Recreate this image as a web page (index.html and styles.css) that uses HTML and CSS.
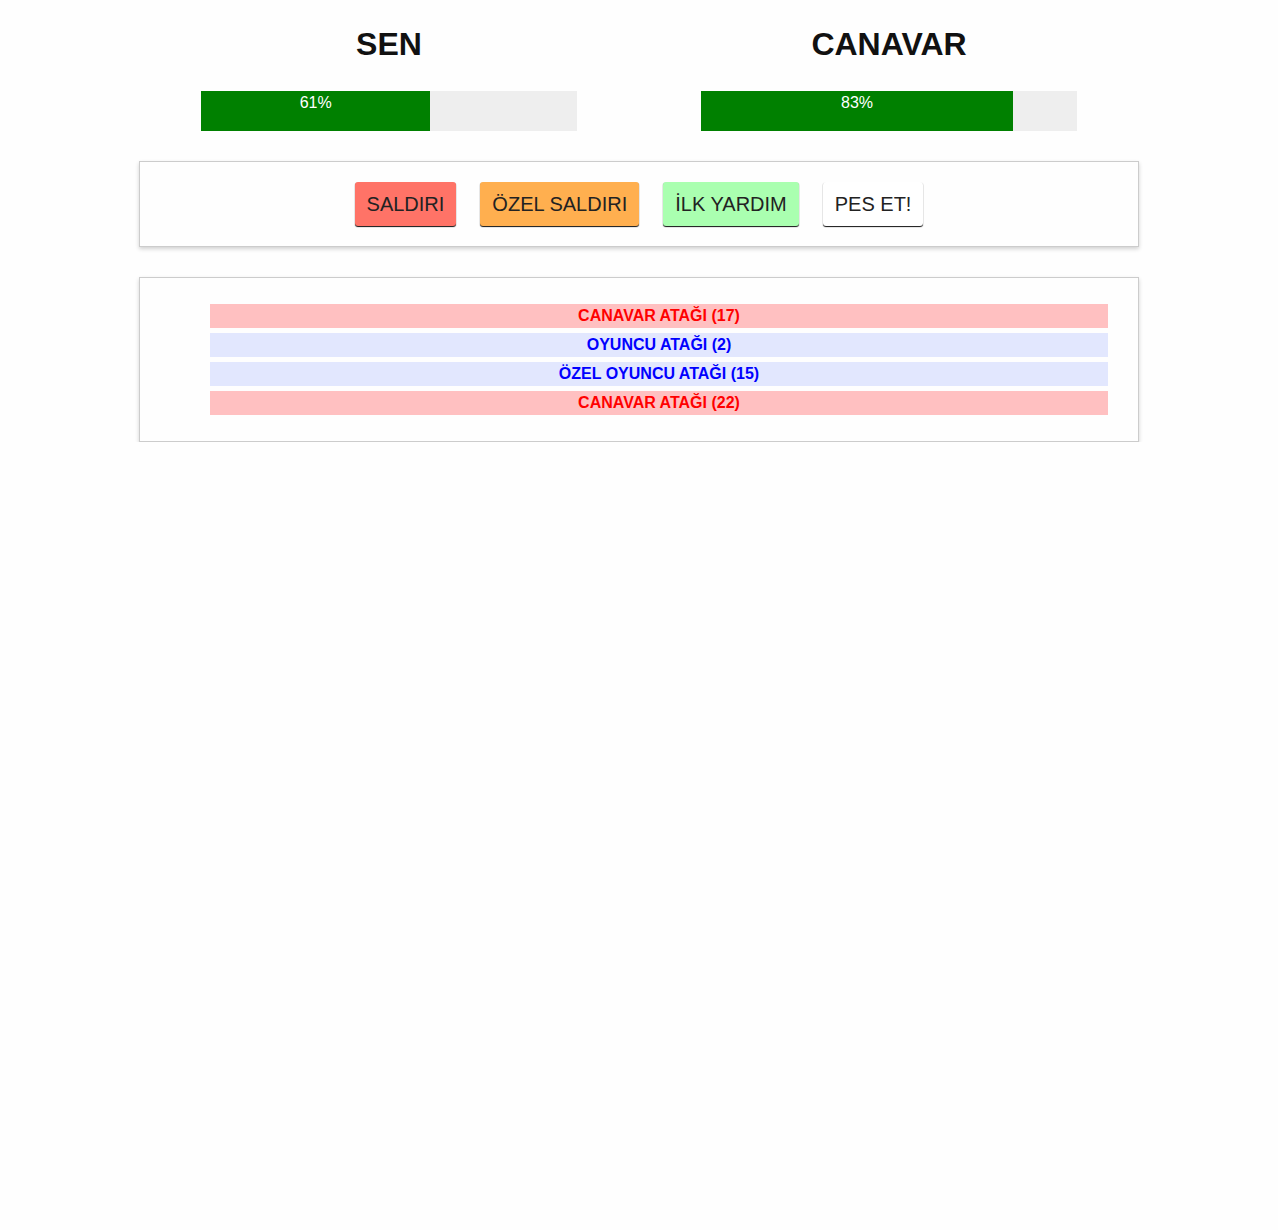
FILE: index.html
```html
<!DOCTYPE html>
<html lang="tr">
<head>
<meta charset="utf-8">
<title>Canavar Avcısı</title>
<link rel="stylesheet" href="styles.css">
</head>
<body>
<div class="wrap">
  <section class="stats">
    <div class="side">
      <h1 class="name">SEN</h1>
      <div class="healthbar">
        <div class="fill" style="width: 61%">61%</div>
      </div>
    </div>
    <div class="side">
      <h1 class="name">CANAVAR</h1>
      <div class="healthbar">
        <div class="fill" style="width: 83%">83%</div>
      </div>
    </div>
  </section>

  <section class="box controls">
    <button class="btn attack">SALDIRI</button>
    <button class="btn special">ÖZEL SALDIRI</button>
    <button class="btn heal">İLK YARDIM</button>
    <button class="btn giveup">PES ET!</button>
  </section>

  <section class="box log">
    <ul class="log-list">
      <li class="monster-turn">CANAVAR ATAĞI (17)</li>
      <li class="player-turn">OYUNCU ATAĞI (2)</li>
      <li class="player-turn">ÖZEL OYUNCU ATAĞI (15)</li>
      <li class="monster-turn">CANAVAR ATAĞI (22)</li>
    </ul>
  </section>
</div>
</body>
</html>
```

FILE: styles.css
```css
html, body {
  margin: 0;
  padding: 0;
  background: #fefefe;
}

body {
  font-family: "Liberation Sans", Arial, sans-serif;
  color: #111;
}

.wrap {
  width: 1000px;
  margin: 0 auto;
  padding-top: 26px;
}

.stats {
  display: flex;
}

.side {
  flex: 1;
  display: flex;
  flex-direction: column;
  align-items: center;
}

.name {
  margin: 0 0 28px;
  font-size: 32px;
  line-height: 37px;
  font-weight: bold;
  color: #111;
}

.healthbar {
  width: 376px;
  height: 40px;
  background: #eeeeee;
}

.fill {
  height: 40px;
  background: #008000;
  color: #ffffff;
  font-size: 16px;
  line-height: 24px;
  text-align: center;
}

.box {
  border: 1px solid #cccccc;
  background: #fefefe;
  box-shadow: 0 2px 4px rgba(0, 0, 0, 0.18);
}

.controls {
  margin-top: 30px;
  padding: 20px 0 20px;
  display: flex;
  justify-content: center;
  gap: 24px;
}

.btn {
  font-family: "Liberation Sans", Arial, sans-serif;
  font-size: 20px;
  line-height: 23px;
  padding: 11px 12px 10px;
  border: none;
  border-radius: 3px;
  color: #222;
  box-shadow: 0 1px 1px #111;
  cursor: pointer;
}

.attack { background: #ff7367; }
.special { background: #ffaf4f; }
.heal { background: #aaffb0; }
.giveup { background: #ffffff; }

.log {
  margin-top: 30px;
  padding: 26px 30px 26px 70px;
}

.log-list {
  list-style: none;
  margin: 0;
  padding: 0;
  display: flex;
  flex-direction: column;
  gap: 5px;
}

.log-list li {
  height: 24px;
  line-height: 24px;
  text-align: center;
  font-size: 16px;
  font-weight: bold;
}

.monster-turn {
  color: #ff0000;
  background: #ffc0c1;
}

.player-turn {
  color: #0000ff;
  background: #e2e7fe;
}
```
